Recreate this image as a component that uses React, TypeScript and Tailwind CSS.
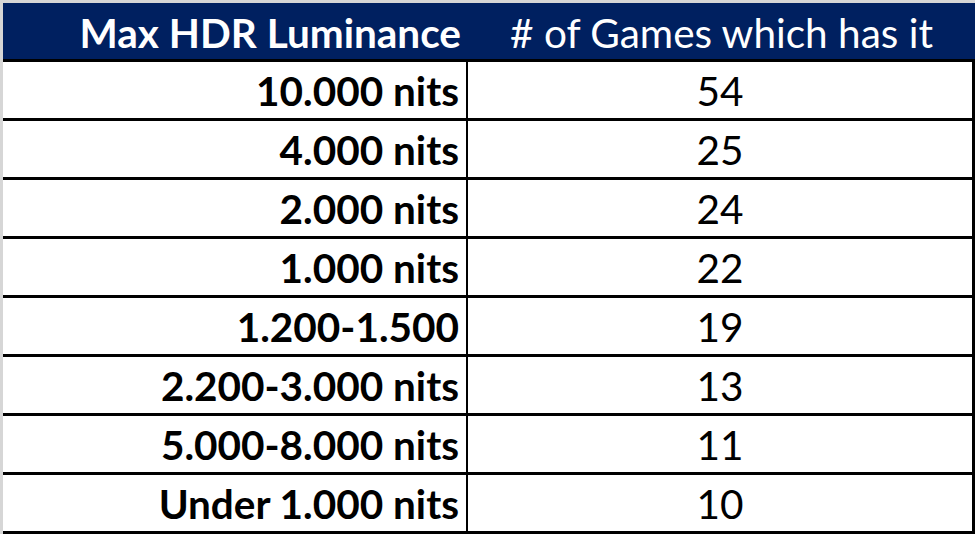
const rows: [string, number][] = [
  ["10.000 nits", 54],
  ["4.000 nits", 25],
  ["2.000 nits", 24],
  ["1.000 nits", 22],
  ["1.200-1.500", 19],
  ["2.200-3.000 nits", 13],
  ["5.000-8.000 nits", 11],
  ["Under 1.000 nits", 10],
];

export default function App() {
  return (
    <div
      className="h-[534px] w-[975px] overflow-hidden bg-[#d6d6d6] pl-[3px] pt-[3px] text-[40.5px] leading-none text-black"
      style={{ fontFamily: "Lato, 'Open Sans', sans-serif" }}
    >
      <div className="flex h-[56px] bg-[#002060] text-white">
        <div className="flex w-[465px] items-center justify-end pr-[7px] pt-[4px] font-bold">
          Max HDR Luminance
        </div>
        <div className="flex flex-1 items-center justify-center pt-[4px]">
          # of Games which has it
        </div>
      </div>
      <div className="border-r-[3px] border-t-[3px] border-black bg-white">
        {rows.map(([label, count]) => (
          <div key={label} className="flex h-[59px] border-b-[3px] border-black">
            <div className="flex w-[465px] items-center justify-end border-r-2 border-black pr-[7px] pt-[2px] font-bold">
              {label}
            </div>
            <div className="flex flex-1 items-center justify-center pt-[2px]">{count}</div>
          </div>
        ))}
      </div>
    </div>
  );
}
